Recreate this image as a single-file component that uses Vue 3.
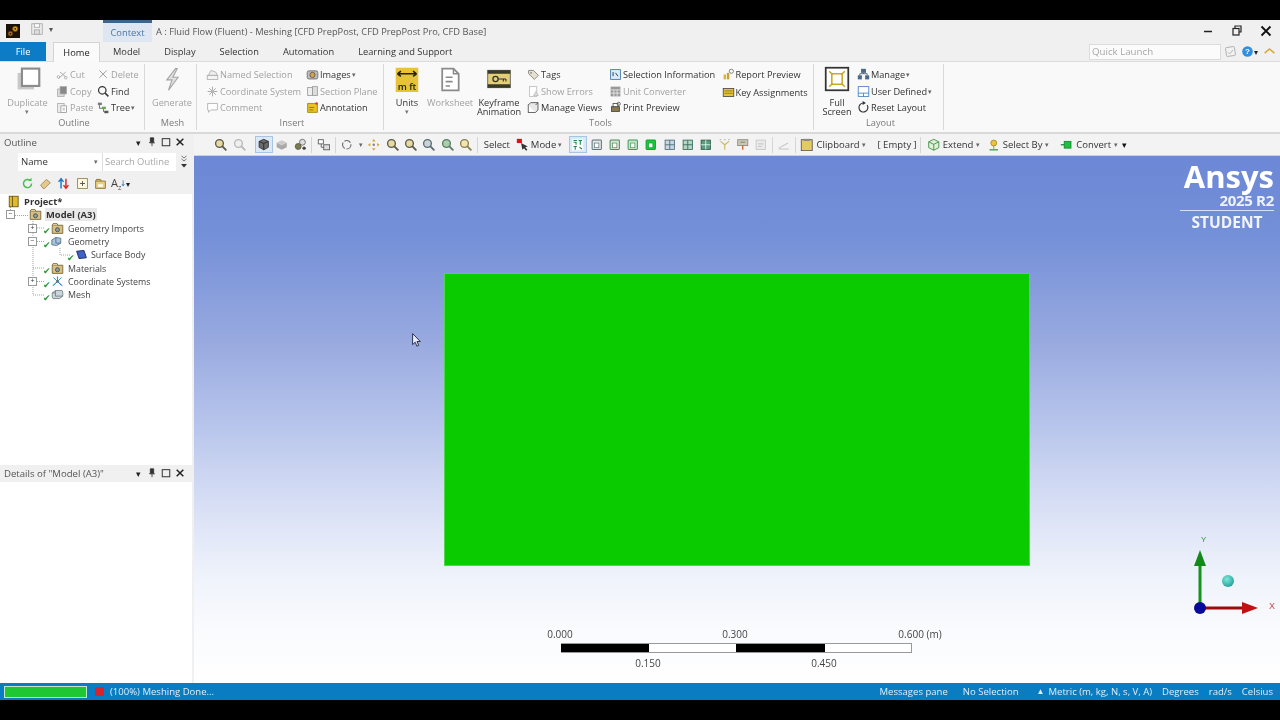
<script setup>
const mag = (f, s = '#5a5a4a') => `<circle cx="6.5" cy="6.5" r="4.6" fill="${f}" stroke="${s}" stroke-width="1.6"/><path d="M10 10l4 4" stroke="${s}" stroke-width="2.2" stroke-linecap="round"/>`
const win = (f, s = '#5f7378') => `<rect x="2.5" y="2.5" width="11" height="11" rx="1" fill="${f}" stroke="${s}" stroke-width="1.2"/><rect x="5.5" y="6" width="5" height="5.5" fill="#fff" stroke="${s}" stroke-width=".8"/>`
const icons = {
  cut: '<path d="M3 13l9-8M5 5l7 6" stroke="#aaa" stroke-width="1.2" fill="none"/><circle cx="3" cy="11" r="1.6" fill="none" stroke="#aaa"/><circle cx="12" cy="12" r="1.6" fill="none" stroke="#aaa"/>',
  x: '<path d="M3 3l9 9M12 3l-9 9" stroke="#9a9a9a" stroke-width="1.2"/>',
  copy: '<rect x="2" y="5" width="8" height="9" fill="#ddd" stroke="#aaa"/><rect x="5" y="2" width="8" height="9" fill="#888" stroke="#aaa"/>',
  find: '<circle cx="6.5" cy="6.5" r="4.6" fill="none" stroke="#333" stroke-width="1.5"/><path d="M10 10l4 4" stroke="#333" stroke-width="1.8"/>',
  paste: '<rect x="2" y="3" width="8" height="11" fill="#eee" stroke="#aaa"/><rect x="6" y="6" width="7" height="8" fill="#fff" stroke="#999"/><path d="M8 9h3M8 11h3" stroke="#aaa"/>',
  tree: '<rect x="1" y="2" width="5" height="3" fill="#7a7a7a"/><rect x="6" y="7" width="5" height="3" fill="#6aa84f"/><rect x="9" y="12" width="5" height="3" fill="#555"/><path d="M3 5v4h3M8 10v3h1" stroke="#555" fill="none"/>',
  named: '<rect x="1.5" y="9" width="13" height="5" fill="#f4f4f4" stroke="#aaa"/><path d="M3 9l3-6 6 2 2 4z" fill="#eee" stroke="#aaa"/>',
  coord: '<path d="M8 2v12M2 8h12M4 4l8 8M12 4l-8 8" stroke="#aaa" stroke-width="1.2"/><circle cx="8" cy="8" r="1.5" fill="#bbb"/>',
  comment: '<path d="M2 3h12v8H6l-3 3v-3H2z" fill="#fff" stroke="#aaa"/>',
  images: '<rect x="1.5" y="3.5" width="13" height="10" rx="2" fill="#bdbdbd" stroke="#666"/><circle cx="8" cy="8.5" r="3.2" fill="#d9a441" stroke="#555"/>',
  section: '<rect x="2" y="3" width="6" height="10" fill="#eee" stroke="#999"/><rect x="8" y="2" width="6" height="11" fill="#ddd" stroke="#999"/>',
  annot: '<path d="M2 3h12v11H2z" fill="#e8c21e" stroke="#9a7c10"/><path d="M4 8h6M4 11h5" stroke="#8a6c08"/><circle cx="13" cy="3" r="1.5" fill="#d33"/>',
  tags: '<path d="M2 3h6l6 6-5 5-7-7z" fill="#e6e0d0" stroke="#777"/><circle cx="5" cy="6" r="1" fill="#777"/>',
  errors: '<rect x="3" y="2" width="9" height="12" fill="#fff" stroke="#bbb"/><path d="M11 8l3 5H8z" fill="#ddd" stroke="#bbb"/>',
  views: '<rect x="1.5" y="5" width="9" height="9" fill="#fff" stroke="#444"/><path d="M1.5 5l3-3h9v9l-3 3M10.5 5l3-3" fill="#e8e8e8" stroke="#444"/>',
  selinfo: '<rect x="2" y="2" width="12" height="12" fill="#dceafa" stroke="#3a6ea5"/><path d="M5 5v5M8 6l3 4" stroke="#245" stroke-width="1.2"/>',
  unit: '<rect x="2" y="2" width="12" height="12" fill="#999"/><path d="M2 6h12M6 6v8M10 6v8M2 10h12" stroke="#eee"/>',
  printp: '<rect x="3" y="7" width="10" height="6" fill="#8a7a50" stroke="#444"/><rect x="5" y="3" width="6" height="4" fill="#fff" stroke="#444"/><circle cx="12" cy="3.5" r="2" fill="none" stroke="#555"/>',
  report: '<rect x="2" y="8" width="3" height="6" fill="#d9b53a"/><rect x="6" y="6" width="3" height="8" fill="#c9a530"/><circle cx="11.5" cy="4" r="2.5" fill="#fff" stroke="#666"/>',
  keys: '<rect x="1.5" y="3" width="13" height="10" fill="#e3c23a" stroke="#444"/><path d="M3 6h10M3 9h10" stroke="#8a7520"/>',
  manage: '<rect x="5" y="1" width="6" height="5" fill="#4a6a8a"/><rect x="1" y="9" width="5" height="5" fill="#4a6a8a"/><rect x="10" y="9" width="5" height="5" fill="#4a6a8a"/><path d="M3.5 9V7h9v2M8 6v1" stroke="#456" fill="none"/>',
  user: '<rect x="1.5" y="2" width="13" height="12" fill="#fff" stroke="#3a78c2"/><path d="M1.5 10h13M8 10v4" stroke="#3a78c2"/>',
  reset: '<path d="M12.5 5A5.5 5.5 0 1 1 8 2.5" fill="none" stroke="#333" stroke-width="1.4"/><path d="M7 0l4 2.5L7 5z" fill="#333"/>',
  dup: '<rect x="3" y="8" width="19" height="19" fill="#c9c9c9"/><rect x="8" y="3" width="20" height="20" fill="#fff" stroke="#8c8c8c" stroke-width="2.5"/>',
  gen: '<path d="M19 3L9 16h6l-4 12 11-15h-6l5-10z" fill="#e2e2e2" stroke="#a5a5a5" stroke-width="1.3"/>',
  units: '<rect x="2" y="2" width="26" height="30" fill="#e8c33a"/><path d="M4 9h22M4 9l4-3M4 9l4 3M26 9l-4-3M26 9l-4 3" stroke="#222" stroke-width="1.8" fill="none"/>',
  sheet: '<path d="M6 3h13l6 6v19H6z" fill="#fff" stroke="#8a8a8a" stroke-width="2"/><path d="M19 3v6h6M10 13h8M10 18h8M10 23h5" stroke="#8a8a8a" stroke-width="1.8" fill="none"/>',
  key: '<rect x="2" y="5" width="26" height="20" fill="#e4cf76" stroke="#555"/><path d="M2 5h26v4H2zM2 21h26v4H2z" fill="#3a3a2a"/><circle cx="11" cy="15" r="3" fill="none" stroke="#333" stroke-width="1.5"/><path d="M14 15h9M20 15v3M23 15v3" stroke="#333" stroke-width="1.3"/>',
  full: '<rect x="2" y="2" width="26" height="26" fill="#fff" stroke="#333" stroke-width="2"/><path d="M9 9h12v12H9z" fill="none" stroke="#c9a92e" stroke-width="1.8"/><path d="M6 6l4 4M24 6l-4 4M6 24l4-4M24 24l-4-4" stroke="#c9a92e" stroke-width="1.8"/>',
  zg: mag('#e7d9a0'), zl: mag('#efefef', '#b8b8b8'), zb: mag('#c9d3d8', '#5c6d75'), zv: mag('#a8cfa8', '#5c7a6a'), zy: mag('#f2e6b0', '#8a8050'),
  cube: '<path d="M8 1.5l5.5 2.5v7L8 14l-5.5-3V4z" fill="#6a6a6a" stroke="#333"/><path d="M2.5 4L8 6.5 13.5 4M8 6.5V14" stroke="#222" fill="none"/>',
  cubel: '<path d="M8 3l6 3v5l-6 3-6-3V6z" fill="#a9a9a9"/><path d="M2 6l6 3 6-3-6-3z" fill="#ccc"/>',
  edges: '<circle cx="10" cy="5" r="3.5" fill="#ddd" stroke="#666"/><circle cx="5" cy="10" r="3.5" fill="#7c7c4a" stroke="#555"/><circle cx="12" cy="12" r="2" fill="#444"/>',
  layout: '<rect x="1.5" y="2" width="6" height="5" fill="#fff" stroke="#555"/><rect x="8" y="8" width="7" height="6" fill="#ddd" stroke="#555"/><path d="M8 11H5V7" stroke="#555" fill="none"/>',
  rot: '<circle cx="8" cy="8" r="5" fill="none" stroke="#6a6a6a" stroke-width="1.3" stroke-dasharray="8 2"/>',
  pan: '<path d="M8 1l2 3H6zM8 15l-2-3h4zM1 8l3-2v4zM15 8l-3 2V6z" fill="#d8a62e"/><circle cx="8" cy="8" r="1.5" fill="#888"/>',
  mode: '<path d="M6 6l8 4-3 1 2.5 3-1.5 1-2.5-3-2 2z" fill="#333"/><rect x="1" y="1" width="6" height="5" fill="#d11"/>',
  facesel: '<rect x="1.5" y="1.5" width="13" height="13" fill="#fff"/><path d="M3 3h4M3 5h3v3M9 3h4M11 3v5M3 10h4M5 10v4M10 11l3 2" stroke="#1c8a4a" stroke-width="1.3" fill="none"/>',
  w: win('#dfe6e6'), wg: win('#d5e5d5', '#4a8a5a'), wa: win('#c8e5c8', '#3a9a5a'), wgr: win('#17c93a', '#17a030'),
  wt: '<rect x="2.5" y="2.5" width="11" height="11" fill="#c9d6e0" stroke="#4a6a7a"/><path d="M2.5 8h11M8 2.5v11" stroke="#4a6a7a"/>',
  wt2: '<rect x="2.5" y="2.5" width="11" height="11" fill="#b5d5c5" stroke="#2f6a55"/><path d="M2.5 8h11M8 2.5v11" stroke="#2f6a55"/>',
  wt3: '<rect x="2.5" y="2.5" width="11" height="11" fill="#5f9a80" stroke="#2a5a45"/><path d="M2.5 8h11M8 2.5v11" stroke="#dfe"/>',
  xyz: '<path d="M8 14V8M8 8L3 4M8 8l5-4" stroke="#c9b560" stroke-width="1.3"/><path d="M2 2h2M7 2h2M12 2h2" stroke="#aaa"/>',
  probe: '<rect x="2" y="2" width="12" height="7" fill="#c9c9b0" stroke="#888"/><path d="M8 9v5" stroke="#c95a2a" stroke-width="1.5"/><path d="M5 5h6" stroke="#777"/>',
  label: '<rect x="2.5" y="2.5" width="11" height="11" fill="#eaeaea" stroke="#c5c5c5"/><path d="M5 7h6M5 10h4" stroke="#bbb"/>',
  ruler: '<path d="M2 12L13 6M2 13h12" stroke="#c5c5c5" stroke-width="1.2"/>',
  clip: '<rect x="1.5" y="2" width="13" height="13" fill="#e3c968" stroke="#555"/><rect x="4" y="1" width="8" height="2.5" fill="#888"/>',
  extend: '<path d="M8 1.5l6 3v7l-6 3-6-3v-7z" fill="#dff0d8" stroke="#3a8a3a"/><path d="M2 4.5l6 3 6-3M8 7.5v7" stroke="#3a8a3a" fill="none"/>',
  pin: '<circle cx="8" cy="6" r="3.5" fill="#e8c53a" stroke="#a88a20"/><path d="M3 14h10" stroke="#3aa04a" stroke-width="1.6"/><path d="M8 9v4" stroke="#a88a20"/>',
  conv: '<rect x="5" y="4" width="8" height="8" fill="#1fc040" stroke="#128a2a"/><path d="M1 8h4" stroke="#128a2a" stroke-width="1.5"/>',
  refresh: '<path d="M13 8a5 5 0 1 1-1.5-3.5" fill="none" stroke="#3fc24a" stroke-width="1.8"/><path d="M13 1v4H9z" fill="#3fc24a"/>',
  eraser: '<path d="M2 10l7-7 5 4-7 7H5z" fill="#e6c98a" stroke="#9a8250"/>',
  sort: '<path d="M5 14V3M2 6l3-4 3 4" stroke="#1f7ac2" stroke-width="1.8" fill="none"/><path d="M11 2v11M8 10l3 4 3-4" stroke="#d92a2a" stroke-width="1.8" fill="none"/>',
  plus: '<rect x="2" y="2" width="12" height="12" fill="#fff8dc" stroke="#8a7a40"/><path d="M8 5v6M5 8h6" stroke="#555" stroke-width="1.2"/>',
  folder: '<path d="M2 5h12v9H2z" fill="#e9cf7e" stroke="#7a6a30"/><path d="M2 5l1-2h5l1 2" fill="#c9ab50" stroke="#7a6a30"/><path d="M5 9h6v3H5z" fill="#fff"/>',
  az: '<path d="M13 2v9M11 8l2 3 2-3" stroke="#1f7ac2" fill="none" stroke-width="1.2"/>',
  project: '<rect x="1.5" y="1.5" width="11" height="13" fill="#e0b92e" stroke="#5a4a10"/><path d="M5.5 1.5v13" stroke="#5a4a10"/>',
  model: '<path d="M1.5 4h13v10h-13z" fill="#d9c080" stroke="#6a5a30"/><path d="M1.5 4l1-2h5l1 2" fill="#eadca8" stroke="#6a5a30"/><circle cx="8" cy="9.5" r="2.5" fill="#8aa0a8" stroke="#444"/>',
  body: '<path d="M2 4l9-1 3 9-9 1z" fill="#3d62c4" stroke="#1e2f6a" stroke-width="1.2"/>',
  geom: '<path d="M1 6l5-3 6 1v6l-5 3-6-1z" fill="#a9c5de" stroke="#4a6a85"/><path d="M6 3v7l6 0" stroke="#4a6a85" fill="none"/>',
  csys: '<path d="M8 8V2M8 8l-6 5M8 8l6 5M3 3l10 10M13 3L3 13" stroke="#2a8ac2" stroke-width="1.1"/><circle cx="8" cy="8" r="1.5" fill="#d33"/><path d="M8 2v3" stroke="#2ab84a" stroke-width="1.5"/>',
  mesh: '<path d="M1.5 6l4-3h8l1 2v5l-4 3h-8l-1-2z" fill="#ccd5da" stroke="#6a7a82"/><path d="M5.5 3l0 7 9 0M1.5 6h4" stroke="#6a7a82" fill="none"/>',
  logo: '<rect width="16" height="16" fill="#1a1208"/><circle cx="10.5" cy="5.5" r="3" fill="#e0a020" stroke="#6a4a08"/><circle cx="5" cy="11" r="2.6" fill="#c9761a" stroke="#5a3a08"/><circle cx="10.5" cy="5.5" r="1" fill="#1a1208"/><circle cx="5" cy="11" r="1" fill="#1a1208"/>',
  save: '<rect x="2" y="2" width="12" height="12" fill="#eee" stroke="#aaa"/><rect x="5" y="2" width="6" height="4" fill="#fff" stroke="#aaa"/><rect x="5" y="9" width="6" height="5" fill="#ddd" stroke="#aaa"/>',
  ql: '<rect x="2.5" y="2.5" width="11" height="11" rx="1" fill="#f2f2f2" stroke="#a8a8a8" transform="rotate(-8 8 8)"/><path d="M5 9l2 2 4-5" stroke="#aaa" fill="none"/>',
  help: '<circle cx="8" cy="8" r="6.5" fill="#2f8fe0"/><text x="8" y="11.5" font-size="10" font-weight="700" fill="#fff" text-anchor="middle" font-family="Liberation Sans">?</text>',
  caret: '<path d="M2 10l6-5 6 5" stroke="#d9a92e" stroke-width="1.8" fill="none"/>'
}
const ribbon = [
  { name: 'Outline', w: 145, cols: [
    { big: 'dup', label: ['Duplicate'], off: true, w: 55, arrow: true },
    { w: 41, items: [{ t: 'Cut', i: 'cut', off: true }, { t: 'Copy', i: 'copy', off: true }, { t: 'Paste', i: 'paste', off: true }] },
    { w: 46, items: [{ t: 'Delete', i: 'x', off: true }, { t: 'Find', i: 'find' }, { t: 'Tree', i: 'tree', drop: true }] }
  ] },
  { name: 'Mesh', w: 52, cols: [{ big: 'gen', label: ['Generate'], off: true, w: 52, shift: 1 }] },
  { name: 'Insert', w: 187, cols: [
    { w: 100, gap: 8, items: [{ t: 'Named Selection', i: 'named', off: true }, { t: 'Coordinate System', i: 'coord', off: true }, { t: 'Comment', i: 'comment', off: true }] },
    { w: 78, items: [{ t: 'Images', i: 'images', drop: true }, { t: 'Section Plane', i: 'section', off: true }, { t: 'Annotation', i: 'annot' }] }
  ] },
  { name: 'Tools', w: 430, cols: [
    { big: 'units', label: ['Units'], w: 46, arrow: true },
    { big: 'sheet', label: ['Worksheet'], off: true, w: 40 },
    { big: 'key', label: ['Keyframe', 'Animation'], w: 58 },
    { w: 82, gap: -2, items: [{ t: 'Tags', i: 'tags' }, { t: 'Show Errors', i: 'errors', off: true }, { t: 'Manage Views', i: 'views' }] },
    { w: 112.5, items: [{ t: 'Selection Information', i: 'selinfo' }, { t: 'Unit Converter', i: 'unit', off: true }, { t: 'Print Preview', i: 'printp' }] },
    { w: 90, items: [{ t: 'Report Preview', i: 'report' }, { t: 'Key Assignments', i: 'keys' }] }
  ] },
  { name: 'Layout', w: 130, cols: [
    { big: 'full', label: ['Full', 'Screen'], w: 38, shift: 4 },
    { w: 84, items: [{ t: 'Manage', i: 'manage', drop: true }, { t: 'User Defined', i: 'user', drop: true }, { t: 'Reset Layout', i: 'reset' }] }
  ] }
]
const s = (w) => ({ sp: w })
const tools = [
  s(2), { grip: 1 }, s(2), { i: 'zg' }, { i: 'zl' }, s(6), { i: 'cube', on: 1 }, { i: 'cubel' }, { i: 'edges' }, { sep: 1 }, { i: 'layout' }, { sep: 1 }, { i: 'rot' }, { drop: 1, w: 9 }, { i: 'pan' },
  { i: 'zg' }, { i: 'zg' }, { i: 'zb' }, { i: 'zv' }, { i: 'zy' }, { sep: 1 }, { t: 'Select', w: 34 }, { i: 'mode', w: 17 }, { t: 'Mode', w: 21 }, { drop: 1, w: 17 },
  { i: 'facesel', on: 1 }, { i: 'w' }, { i: 'wg' }, { i: 'wa' }, { i: 'wgr' }, { i: 'wt' }, { i: 'wt2' }, { i: 'wt3' }, { i: 'xyz' }, { i: 'probe' }, { i: 'label' }, { sep: 1 }, { i: 'ruler', w: 18 }, { sep: 1 },
  { i: 'clip', w: 18 }, { t: 'Clipboard', w: 44 }, { drop: 1, w: 8 }, s(8), { t: '[ Empty ]', w: 42 }, { sep: 1 }, s(2), { i: 'extend', w: 17 }, { t: 'Extend', w: 32 }, { drop: 1, w: 8 }, s(4),
  { i: 'pin', w: 16 }, { t: 'Select By', w: 41 }, { drop: 1, w: 8 }, s(8), { i: 'conv', w: 16 }, { t: 'Convert', w: 37 }, { drop: 1, w: 8 }, { more: 1 }
]
const outlineTools = ['refresh', 'eraser', 'sort', 'plus', 'folder']
const tree = [
  { t: 'Project*', i: 'project', lv: 0, bold: 1 },
  { t: 'Model (A3)', i: 'model', lv: 1, bold: 1, exp: '−', sel: 1 },
  { t: 'Geometry Imports', i: 'model', lv: 2, exp: '+', ok: 1 },
  { t: 'Geometry', i: 'geom', lv: 2, exp: '−', ok: 1 },
  { t: 'Surface Body', i: 'body', lv: 3, ok: 1 },
  { t: 'Materials', i: 'model', lv: 2, ok: 1 },
  { t: 'Coordinate Systems', i: 'csys', lv: 2, exp: '+', ok: 1 },
  { t: 'Mesh', i: 'mesh', lv: 2, ok: 1 }
]
const tabs = [['Model', 'm'], ['Display', 'd'], ['Selection', 's'], ['Automation', 'a'], ['Learning and Support', 'l']]
const status = ['Messages pane', 'No Selection', 'Metric (m, kg, N, s, V, A)', 'Degrees', 'rad/s', 'Celsius']
</script>

<template>
  <div class="screen">
    <div class="app">
      <header class="title">
        <svg class="logo" viewBox="0 0 16 16" v-html="icons.logo" />
        <svg class="save" viewBox="0 0 16 16" v-html="icons.save" />
        <span class="qat">▾</span>
        <div class="context">Context</div>
        <div class="title-text">A : Fluid Flow (Fluent) - Meshing [CFD PrepPost, CFD PrepPost Pro, CFD Base]</div>
        <div class="winctl">
          <svg viewBox="0 0 14 14"><path d="M3 7.5h8" stroke="#222" stroke-width="1.5" /></svg>
          <svg viewBox="0 0 14 14"><path d="M5 4V2h6v6H9" fill="none" stroke="#222" stroke-width="1.2" /><rect x="3" y="4.5" width="6" height="6.5" fill="none" stroke="#222" stroke-width="1.2" /></svg>
          <svg viewBox="0 0 14 14"><path d="M2.5 2.5l9 9M11.5 2.5l-9 9" stroke="#111" stroke-width="1.8" /></svg>
        </div>
      </header>
      <nav class="tabs">
        <div class="file">File</div>
        <div class="home">Home</div>
        <div v-for="t in tabs" :key="t[1]" class="tab" :class="'tab-' + t[1]">{{ t[0] }}</div>
        <div class="quick">Quick Launch</div>
        <svg class="tico" viewBox="0 0 16 16" v-html="icons.ql" />
        <svg class="tico help" viewBox="0 0 16 16" v-html="icons.help" />
        <span class="helpdrop">▾</span>
        <svg class="tico caret" viewBox="0 0 16 16" v-html="icons.caret" />
      </nav>
      <section class="ribbon">
        <div v-for="g in ribbon" :key="g.name" class="group" :style="{ width: g.w + 'px' }">
          <div class="gbody">
            <template v-for="(c, ci) in g.cols" :key="ci">
              <div v-if="c.big" class="big" :class="{ off: c.off }" :style="{ width: c.w + 'px', marginLeft: (c.shift || 0) + 'px' }">
                <svg class="bigic" viewBox="0 0 30 30" v-html="icons[c.big]" />
                <span v-if="c.big === 'units'" class="mft">m ft</span>
                <div class="biglabel">
                  <span v-for="l in c.label" :key="l">{{ l }}</span>
                  <span v-if="c.arrow" class="bigarrow">▾</span>
                </div>
              </div>
              <div v-else class="col" :style="{ width: c.w + 'px', marginLeft: (c.gap || 0) + 'px' }">
                <div v-for="it in c.items" :key="it.t" class="item" :class="{ off: it.off }">
                  <svg class="ic" viewBox="0 0 16 16" v-html="icons[it.i]" />
                  <span>{{ it.t }}</span>
                  <span v-if="it.drop" class="dd">▾</span>
                </div>
              </div>
            </template>
          </div>
          <div class="glabel">{{ g.name }}</div>
        </div>
      </section>
      <div class="main">
        <aside class="left">
          <div class="pane outline">
            <div class="phead">
              <span>Outline</span><i class="dots" />
              <span class="pb">▾</span>
              <svg class="pi" viewBox="0 0 12 12"><path d="M4 1h4v5l1 1H3l1-1zM6 7v4" fill="#333" stroke="#333" /></svg>
              <svg class="pi" viewBox="0 0 12 12"><rect x="1.5" y="2" width="9" height="8.5" fill="none" stroke="#333" stroke-width="1.2" /></svg>
              <svg class="pi" viewBox="0 0 12 12"><path d="M2 2l8 8M10 2l-8 8" stroke="#222" stroke-width="1.8" /></svg>
            </div>
            <div class="filter">
              <div class="sel">Name<span class="dd big-dd">▾</span></div>
              <div class="search">Search Outline</div>
              <svg class="morebtn" viewBox="0 0 8 14"><path d="M1.5 1L4 3l2.5-2M1.5 4L4 6l2.5-2" fill="none" stroke="#777" /><path d="M1 9h6l-3 3.5z" fill="#333" /></svg>
            </div>
            <div class="otools">
              <svg v-for="o in outlineTools" :key="o" class="oi" viewBox="0 0 16 16" v-html="icons[o]" />
              <span class="az">A<sub>Z</sub></span>
              <svg class="azi" viewBox="0 0 16 16" v-html="icons.az" />
              <span class="azd">▾</span>
            </div>
            <div class="tree">
              <svg class="lines" viewBox="0 0 192 110" width="192" height="110">
                <path d="M10.5 13v4M15 21.5h14M33 27V101H44M37 34h8M37 47.5h8M33 74h12M37 87.5h8M60 54v7h10" fill="none" stroke="#a5a5a5" stroke-dasharray="1 1" />
              </svg>
              <div v-for="n in tree" :key="n.t" class="node" :class="'lv' + n.lv">
                <span class="exp" :class="{ hide: !n.exp }">{{ n.exp }}</span>
                <span v-if="n.ok" class="check">✔</span>
                <svg class="ti" viewBox="0 0 16 16" v-html="icons[n.i]" />
                <span class="nt" :class="{ b: n.bold, s: n.sel }">{{ n.t }}</span>
              </div>
            </div>
          </div>
          <div class="pane details">
            <div class="phead">
              <span>Details of "Model (A3)"</span><i class="dots" />
              <span class="pb">▾</span>
              <svg class="pi" viewBox="0 0 12 12"><path d="M4 1h4v5l1 1H3l1-1zM6 7v4" fill="#333" stroke="#333" /></svg>
              <svg class="pi" viewBox="0 0 12 12"><rect x="1.5" y="2" width="9" height="8.5" fill="none" stroke="#333" stroke-width="1.2" /></svg>
              <svg class="pi" viewBox="0 0 12 12"><path d="M2 2l8 8M10 2l-8 8" stroke="#222" stroke-width="1.8" /></svg>
            </div>
            <div class="dbody" />
          </div>
        </aside>
        <div class="right">
          <div class="toolbar">
            <template v-for="(b, i) in tools" :key="i">
              <i v-if="b.sp" class="gapx" :style="{ width: b.sp + 'px' }" />
              <i v-else-if="b.grip" class="grip" />
              <i v-else-if="b.sep" class="sep" />
              <span v-else-if="b.drop" class="tdrop" :style="{ width: b.w + 'px' }">▾</span>
              <span v-else-if="b.t" class="ttext" :style="{ width: b.w + 'px' }">{{ b.t }}</span>
              <span v-else-if="b.more" class="tmore">▾</span>
              <span v-else class="tb" :class="{ on: b.on }" :style="b.w ? { width: b.w + 'px' } : null">
                <svg viewBox="0 0 16 16" v-html="icons[b.i]" />
              </span>
            </template>
          </div>
          <div class="view">
            <div class="brand">
              <div class="b1">Ansys</div>
              <div class="b2">2025 R2</div>
              <div class="b3">STUDENT</div>
            </div>
            <div class="body3d" />
            <svg class="cursor" viewBox="0 0 9 14"><path d="M.6.6v11l2.6-2.4 1.7 4 1.8-.8-1.700-3.900h3.300z" fill="#e8ecf8" stroke="#1c2440" stroke-width=".9" /></svg>
            <svg class="triad" viewBox="0 0 100 100">
              <defs>
                <radialGradient id="sph" cx=".4" cy=".35" r=".7"><stop offset="0" stop-color="#7fe8d8" /><stop offset="1" stop-color="#1f9f9a" /></radialGradient>
              </defs>
              <path d="M16 77V30" stroke="#16921f" stroke-width="3" />
              <path d="M16 19l-6 16h12z" fill="#118a1a" />
              <path d="M16 77h47" stroke="#9c0a0a" stroke-width="3" />
              <path d="M74 77L58 71v12z" fill="#c01010" />
              <circle cx="16" cy="77" r="6" fill="#0a0a9a" />
              <circle cx="44" cy="50" r="6" fill="url(#sph)" />
              <text x="17" y="11" font-size="8" fill="#2a9a2a" font-family="Liberation Sans">Y</text>
              <text x="85" y="78" font-size="9" fill="#c84a4a" font-family="Liberation Sans">X</text>
            </svg>
            <div class="scale">
              <div class="srow top"><span class="l0">0.000</span><span class="l3">0.300</span><span class="l6">0.600 (m)</span></div>
              <div class="bar"><i class="k" /><i /><i class="k" /><i /></div>
              <div class="srow bot"><span class="l1">0.150</span><span class="l4">0.450</span></div>
            </div>
          </div>
        </div>
      </div>
      <footer class="status">
        <div class="prog"><i /></div>
        <i class="red" />
        <span>(100%) Meshing Done...</span>
        <div class="sright">
          <span v-for="x in status" :key="x" :class="'st-' + x.slice(0, 3).replace('/', '').trim()">{{ x }}</span>
        </div>
      </footer>
    </div>
  </div>
</template>

<style>
html, body { margin: 0; background: #000; }
</style>

<style scoped>
.screen { width: 1280px; height: 720px; background: #000; padding: 20px 0; box-sizing: border-box; overflow: hidden; font-family: "Open Sans", "Noto Sans", sans-serif; }
.app { height: 680px; display: flex; flex-direction: column; background: #f0f0f0; color: #333; font-size: 9.2px; filter: blur(.35px); }
svg { display: block; }

.title { height: 22px; display: flex; align-items: center; flex: none; }
.logo { width: 14px; height: 14px; margin-left: 6px; }
.save { width: 14px; height: 14px; margin-left: 10px; margin-top: -4px; }
.qat { margin-left: 5px; font-size: 8px; color: #555; margin-top: -6px; }
.context { align-self: stretch; margin-left: 50px; width: 49px; background: #dde6f1; border-top: 3px solid #3a6690; box-sizing: border-box; color: #4c78a8; display: flex; align-items: center; justify-content: center; font-size: 9.4px; padding-bottom: 1px; }
.title-text { margin-left: 4px; color: #555; font-size: 9.3px; padding-top: 1px; }
.winctl { margin-left: auto; display: flex; gap: 15px; margin-right: 8px; transform: translateX(1px); }
.winctl svg { width: 14px; height: 14px; }

.tabs { height: 20px; display: flex; align-items: center; flex: none; position: relative; font-size: 9.3px; border-bottom: 1px solid #dcdcdc; box-sizing: border-box; }
.file { width: 46px; height: 19px; background: #0d7cc6; color: #fff; display: flex; align-items: center; justify-content: center; }
.home { margin-left: 7px; width: 47px; height: 20px; background: #fafafa; border: 1px solid #d4d4d4; border-bottom: 0; box-sizing: border-box; display: flex; align-items: center; justify-content: center; color: #222; }
.tab { color: #333; }
.tab-m { margin-left: 13px; }
.tab-d { margin-left: 24px; }
.tab-s { margin-left: 24px; }
.tab-a { margin-left: 24px; }
.tab-l { margin-left: 24px; }
.quick { margin-left: auto; width: 132px; height: 16px; box-sizing: border-box; background: #fbfbfb; border: 1px solid #dcdcdc; color: #a8a8a8; padding-left: 2px; display: flex; align-items: center; font-size: 9.7px; }
.tico { width: 13px; height: 13px; margin-left: 3px; }
.help { margin-left: 4px; }
.helpdrop { font-size: 8px; color: #222; margin-right: 5px; }
.caret { margin: 0 4px 0 0; }

.ribbon { height: 70px; background: #f9f9f9; display: flex; flex: none; border-bottom: 2px solid #d9d9d9; box-sizing: content-box; }
.group { box-sizing: border-box; height: 66px; margin-top: 2px; border-right: 1px solid #d8d8d8; display: flex; flex-direction: column; flex: none; }
.gbody { height: 52px; flex: none; display: flex; }
.glabel { text-align: center; color: #7a7a7a; height: 14px; line-height: 13px; padding-left: 4px; }
.off { color: #a2a2a2; }
.big { display: flex; flex-direction: column; align-items: center; position: relative; flex: none; }
.bigic { width: 26px; height: 26px; margin-top: 2px; flex: none; }
.biglabel { margin-top: 6px; display: flex; flex-direction: column; align-items: center; line-height: 9.3px; }
.bigarrow { font-size: 7px; color: #777; line-height: 9px; }
.mft { position: absolute; top: 16px; left: 0; right: 0; text-align: center; font-size: 9.5px; font-weight: 600; color: #222; }
.col { flex: none; display: flex; flex-direction: column; padding-top: 2.2px; }
.item { height: 17.6px; display: flex; align-items: center; white-space: nowrap; }
.ic { width: 13px; height: 13px; margin: 0 1px; flex: none; }
.dd { font-size: 7px; color: #666; margin-left: 1px; }

.main { flex: 1; min-height: 0; display: flex; }
.left { width: 192px; flex: none; display: flex; flex-direction: column; margin-right: 2px; background: #f0f0f0; }
.pane { display: flex; flex-direction: column; }
.outline { height: 331px; flex: none; }
.details { flex: 1; }
.phead { height: 17px; flex: none; display: flex; align-items: center; padding: 0 5px 1px 4px; box-sizing: border-box; font-size: 9.6px; color: #555; }
.dots { flex: 1; height: 4px; margin: 0 4px; background-image: radial-gradient(#bbb .6px, transparent .7px); background-size: 2px 2px; }
.pb { font-size: 9px; color: #222; width: 14px; text-align: center; }
.pi { width: 10px; height: 10px; margin: 0 2px; }
.filter { height: 19px; margin-top: 1px; display: flex; align-items: center; padding-left: 18px; flex: none; }
.sel { width: 84px; height: 18px; background: #fff; box-sizing: border-box; padding-left: 3px; display: flex; align-items: center; justify-content: space-between; padding-right: 4px; color: #333; font-size: 9.6px; }
.search { width: 74px; height: 18px; background: #fff; color: #a8a8a8; display: flex; align-items: center; padding-left: 2px; box-sizing: border-box; border-left: 1px solid #ddd; font-size: 9.4px; white-space: nowrap; }
.morebtn { width: 8px; height: 14px; margin-left: 4px; }
.otools { height: 23px; display: flex; align-items: center; padding: 2px 0 0 21px; box-sizing: border-box; gap: 5.2px; flex: none; }
.oi { width: 13px; height: 13px; }
.az { font-size: 11px; color: #444; margin-left: -1px; }
.az sub { font-size: 6px; }
.azi { width: 10px; height: 12px; margin-left: -12px; }
.azd { font-size: 8px; color: #222; margin-left: -4px; }
.tree { flex: 1; background: #fff; position: relative; padding-top: 1px; }
.lines { position: absolute; top: 0; left: 0; }
.node { height: 13.33px; display: flex; align-items: center; white-space: nowrap; position: relative; color: #444; font-size: 8.9px; }
.lv0 { padding-left: 2px; }
.lv1 { padding-left: 6px; }
.lv2 { padding-left: 28px; }
.lv3 { padding-left: 56px; }
.lv0 .exp, .lv3 .exp { visibility: hidden; }
.exp { width: 7px; height: 7px; border: 1px solid #999; background: #fff; font-size: 7px; line-height: 6px; text-align: center; flex: none; color: #333; box-sizing: content-box; }
.exp.hide { border-color: transparent; background: transparent; }
.lv0 .exp { width: 4px; }
.check { color: #2a9a3a; font-size: 9px; width: 7px; margin-left: 6px; margin-top: 5px; flex: none; }
.lv1 .ti { margin-left: 14px; }
.lv3 .check { margin-left: 2px; }
.ti { width: 13px; height: 13px; margin-left: 1px; flex: none; }
.lv0 .ti { margin-left: 0; }
.nt { margin-left: 4px; }
.lv3 .nt { margin-left: 3px; }
.lv0 .nt { margin-left: 3px; }
.b { font-weight: 700; color: #333; font-size: 9.4px; }
.s { background: #e8e8e8; padding: 0 1px; margin-left: 3px; }
.dbody { flex: 1; background: #fff; }

.right { flex: 1; display: flex; flex-direction: column; min-width: 0; }
.toolbar { height: 22px; flex: none; display: flex; align-items: center; background: #f3f3f3; border-bottom: 1px solid #c5d2ea; box-sizing: border-box; }
.gapx { display: block; flex: none; }
.grip { width: 10px; height: 16px; margin-left: 4px; background-image: radial-gradient(#bbb .6px, transparent .7px); background-size: 2px 2px; flex: none; }
.sep { width: 1px; height: 16px; background: #d5d5d5; margin: 0 2px; flex: none; }
.tb { width: 18.3px; height: 17px; display: flex; align-items: center; justify-content: center; flex: none; box-sizing: border-box; }
.tb svg { width: 13.5px; height: 13.5px; }
.on { background: #dbe8f6; border: 1px solid #a8c4e2; }
.ttext { flex: none; white-space: nowrap; font-size: 9.5px; color: #333; text-align: center; }
.tdrop { font-size: 7px; color: #666; text-align: center; flex: none; }
.tmore { font-size: 9px; color: #111; margin-left: 2px; flex: none; }

.view { flex: 1; position: relative; background: linear-gradient(#6c88d6 0%, #7490d8 15%, #98a9df 35%, #b5c3eb 50%, #cbd5f1 60%, #dfe5f7 70%, #eff3fb 80%, #fafbfe 90%, #fff 100%); overflow: hidden; }
.brand { position: absolute; top: 4px; right: 6px; width: 94px; color: #fff; text-align: right; font-weight: 700; font-family: "Open Sans", sans-serif; }
.b1 { font-size: 31px; line-height: 33px; }
.b2 { font-size: 15px; line-height: 16px; color: #eef1fa; letter-spacing: -.3px; margin-top: -1px; }
.b3 { font-size: 15.5px; line-height: 22px; margin-top: 2px; border-top: 1px solid #d5defa; text-align: center; color: #f2f4fb; }
.body3d { position: absolute; left: 250px; top: 117px; width: 586px; height: 293px; background: #0acb00; box-shadow: inset 0 0 0 1px #4fd84a; }
.cursor { position: absolute; left: 218px; top: 177px; width: 9px; height: 14px; }
.triad { position: absolute; left: 990px; top: 375px; width: 100px; height: 100px; overflow: visible; }
.scale { position: absolute; left: 367px; top: 471px; width: 351px; font-size: 10px; color: #444; }
.srow { height: 16px; position: relative; }
.srow span { position: absolute; transform: translateX(-50%); white-space: nowrap; }
.l0 { left: -1px; }
.l3 { left: 174px; }
.l6 { left: 359px; }
.l1 { left: 87px; top: 3px; }
.l4 { left: 263px; top: 3px; }
.bar { display: grid; grid-template-columns: 88px 87px 89px 87px; height: 10px; border: 1px solid #999; border-left: 0; box-sizing: border-box; background: #fff; }
.k { background: #000; }

.status { height: 17px; flex: none; background: #0a7dc2; color: #dceefa; display: flex; align-items: center; font-size: 9.55px; }
.prog { width: 83px; height: 12px; margin-left: 4px; box-sizing: border-box; border: 1px solid #bfe6c8; background: #1fc832; }
.red { width: 9px; height: 9px; background: #d8232e; margin: 0 6px 0 8px; display: block; }
.sright { margin-left: auto; display: flex; margin-right: 7px; }
.st-Mes { margin-right: 15px; }
.st-No { margin-right: 18px; }
.st-Met { margin-right: 10px; }
.st-Met::before { content: "▲"; font-size: 8px; margin-right: 4px; vertical-align: 1px; }
.st-Deg { margin-right: 10px; }
.st-rad { margin-right: 10px; }
</style>
